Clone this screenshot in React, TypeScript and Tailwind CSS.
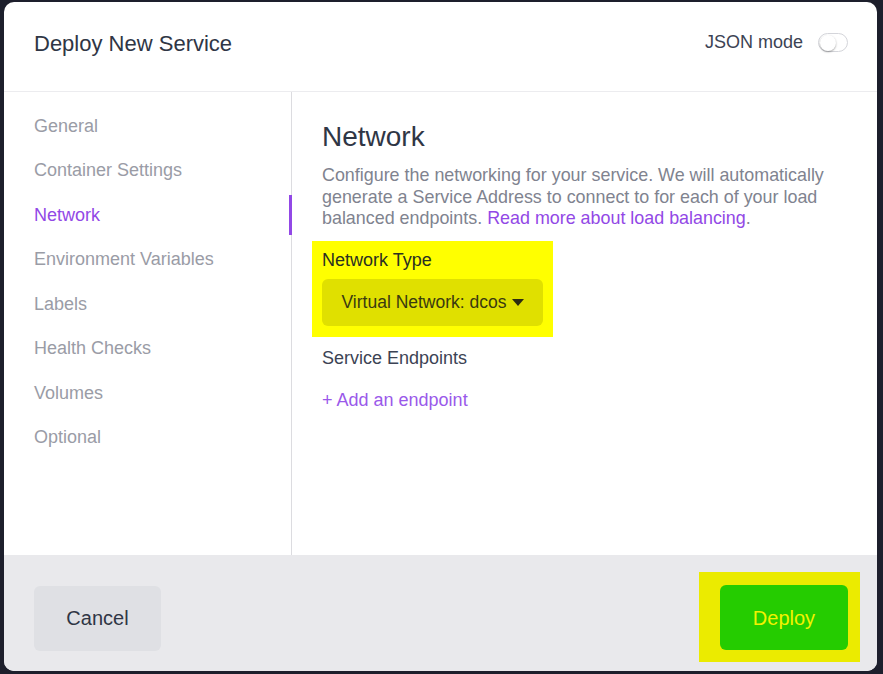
const navItems = [
  "General",
  "Container Settings",
  "Network",
  "Environment Variables",
  "Labels",
  "Health Checks",
  "Volumes",
  "Optional",
];

export default function App() {
  return (
    <div className="w-[883px] h-[674px] bg-[#1d1f2c] pt-[2px] pl-[4px] font-['Liberation_Sans',Arial,sans-serif]">
      <div className="w-[873px] h-[669px] bg-white rounded-[10px] overflow-hidden flex flex-col">
        {/* header */}
        <div className="h-[90px] border-b border-[#ececef] flex items-center justify-between pl-[30px] pr-[29px] shrink-0">
          <h1 className="text-[22px] text-[#2f3645] pb-[6px]">Deploy New Service</h1>
          <div className="flex items-center gap-[15px] pb-[8px]">
            <span className="text-[18px] text-[#3c4354]">JSON mode</span>
            <div className="w-[30px] h-[19px] rounded-full border border-[#d4d5da] bg-white flex items-center px-[1px]">
              <div className="w-[16px] h-[16px] rounded-full bg-white shadow-[0_1px_2px_rgba(0,0,0,0.35)]" />
            </div>
          </div>
        </div>

        {/* body */}
        <div className="flex flex-1">
          <nav className="w-[288px] border-r border-[#dcdce0] flex flex-col pt-[12px] shrink-0">
            {navItems.map((item) => (
              <div key={item} className="relative h-[44.5px] flex items-center pl-[30px]">
                <span
                  className={`text-[18px] ${
                    item === "Network" ? "text-[#9248e6]" : "text-[#9a9ca6]"
                  }`}
                >
                  {item}
                </span>
                {item === "Network" && (
                  <div className="absolute right-[-1px] top-[2px] w-[3px] h-[40px] bg-[#9248e6]" />
                )}
              </div>
            ))}
          </nav>

          <div className="flex-1 pl-[30px] pr-[30px] pt-[28px]">
            <h2 className="text-[28px] text-[#2f3645] leading-[34px]">Network</h2>
            <p className="text-[17.9px] text-[#80838f] leading-[21.5px] mt-[11px]">
              Configure the networking for your service. We will automatically generate a Service
              Address to connect to for each of your load balanced endpoints.{" "}
              <a href="#" className="text-[#9248e6]">
                Read more about load balancing
              </a>
              .
            </p>

            <div className="mt-[11px] ml-[-10px] w-[241px] h-[96px] bg-[#ffff00] pl-[10px] pt-[8px]">
              <div className="text-[18px] text-[#2a2f22] leading-[22px]">Network Type</div>
              <div className="mt-[8px] w-[221px] h-[47px] rounded-[6px] bg-[#e0e000] flex items-center justify-center gap-[5px]">
                <span className="text-[17.5px] text-[#3a3a10]">Virtual Network: dcos</span>
                <svg width="12" height="8" viewBox="0 0 12 8" className="mt-[1px]">
                  <path d="M0 0 L12 0 L6 7 Z" fill="#2c2c10" />
                </svg>
              </div>
            </div>

            <div className="text-[18px] text-[#3c4354] mt-[10px] leading-[22px]">Service Endpoints</div>
            <a href="#" className="block text-[18px] text-[#9a59ea] mt-[20px] leading-[22px]">
              + Add an endpoint
            </a>
          </div>
        </div>

        {/* footer */}
        <div className="h-[116px] bg-[#e9e9ec] flex items-center justify-between pl-[30px] pr-[17px] shrink-0">
          <button className="w-[127px] h-[65px] rounded-[6px] bg-[#dfe0e4] text-[20px] text-[#2f3645] mt-[10px]">
            Cancel
          </button>
          <div className="w-[161px] h-[90px] bg-[#ebeb00] pl-[21px] pt-[13px] mt-[8px]">
            <button className="w-[128px] h-[65px] rounded-[6px] bg-[#25cc00] text-[20px] text-[#f2f200]">
              Deploy
            </button>
          </div>
        </div>
      </div>
    </div>
  );
}
